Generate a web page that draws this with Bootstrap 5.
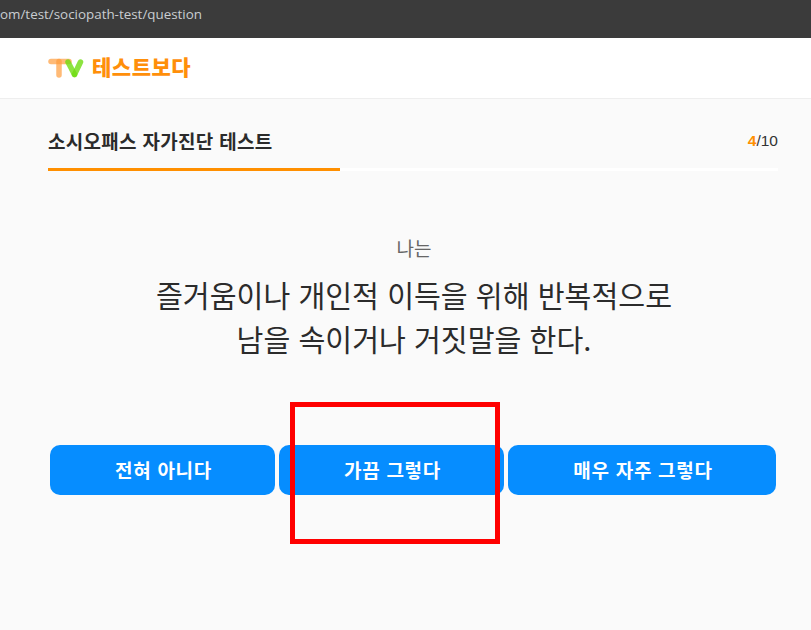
<!DOCTYPE html>
<html lang="ko">
<head>
    <meta charset="UTF-8">
    <meta name="viewport" content="width=device-width, initial-scale=1.0">
    <title>소시오패스 자가진단 테스트</title>
    <link href="https://cdn.jsdelivr.net/npm/bootstrap@5.3.0/dist/css/bootstrap.min.css" rel="stylesheet">
    <style>
        body {
            background: #fafafa;
            font-family: "Noto Sans CJK KR", "Noto Sans", sans-serif;
            color: #2b2b2b;
            height: 630px;
            overflow: hidden;
        }
        .url-bar {
            height: 38px;
            background: #3b3b3b;
            color: #c9cdd1;
            font: 13.4px/29px "Open Sans", sans-serif;
            white-space: nowrap;
        }
        .site-head {
            height: 61px;
            background: #fff;
            border-bottom: 1px solid #eee;
            padding-left: 48px;
        }
        .logo-word {
            color: #ff8f0a;
            font-size: 21px;
            font-weight: 900;
            letter-spacing: .5px;
            line-height: 1;
            margin-top: -3px;
        }
        .quiz-wrap { padding: 0 33px 0 48px; }
        .quiz-top { height: 69px; padding-top: 28px; }
        .quiz-title { font-size: 19px; font-weight: 700; letter-spacing: .3px; line-height: 28px; margin: 0; color: #2b2b2b; }
        .quiz-count { font: 15.5px/28px "Liberation Sans", sans-serif; color: #333; }
        .quiz-count b { color: #ff8f00; }
        .track { height: 3px; background: #fff; }
        .track-fill { height: 3px; background: #ff8f00; }
        .quiz-body { padding-left: 17px; }
        .quiz-lead { margin-top: 65px; font-size: 19px; line-height: 24px; color: #666; }
        .quiz-text { margin-top: 12px; font-size: 29.2px; line-height: 44px; font-weight: 400; color: #2b2b2b; }
        .answers { margin: 85px 35px 0 50px; width: 726px; gap: 4px; }
        .answer-btn {
            height: 50px;
            border: 0;
            border-radius: 10px;
            background: #068dff;
            color: #fff;
            font-size: 19px;
            font-weight: 700;
            letter-spacing: .7px;
            padding: 0 0 0 2px;
        }
        .w-short { width: 225px; }
        .w-long { width: 268px; }
        .mark-box {
            position: absolute;
            left: 290px;
            top: 402px;
            width: 210px;
            height: 142px;
            border: 5px solid #ff0000;
        }
    </style>
</head>
<body>
    <div class="url-bar">om/test/sociopath-test/question</div>

    <!-- 상단 로고 -->
    <div class="site-head d-flex align-items-center gap-2">
        <svg width="36" height="20" viewBox="0 0 36 20" fill="none" stroke-linecap="round">
            <path d="M3 3.5H21" stroke="#ff9d3c" stroke-opacity=".7" stroke-width="5.5"/>
            <path d="M11 3.5V17" stroke="#ff9d3c" stroke-opacity=".7" stroke-width="5.5"/>
            <path d="M20 4L26.5 16.5" stroke="#6fdc10" stroke-opacity=".8" stroke-width="5.5"/>
            <path d="M32.5 4L26.5 16.5" stroke="#6fdc10" stroke-opacity=".8" stroke-width="5.5"/>
        </svg>
        <span class="logo-word">테스트보다</span>
    </div>

    <!-- 진행 상태 -->
    <div class="quiz-wrap">
        <div class="quiz-top d-flex justify-content-between">
            <h1 class="quiz-title">소시오패스 자가진단 테스트</h1>
            <div class="quiz-count"><b>4</b>/10</div>
        </div>
        <div class="track"><div class="track-fill" style="width: 40%"></div></div>
    </div>

    <!-- 질문 -->
    <div class="quiz-body text-center">
        <div class="quiz-lead">나는</div>
        <div class="quiz-text">즐거움이나 개인적 이득을 위해 반복적으로<br>남을 속이거나 거짓말을 한다.</div>
    </div>

    <div class="answers d-flex">
        <button type="button" class="answer-btn w-short">전혀 아니다</button>
        <button type="button" class="answer-btn w-short">가끔 그렇다</button>
        <button type="button" class="answer-btn w-long">매우 자주 그렇다</button>
    </div>

    <div class="mark-box"></div>

    <script src="https://cdn.jsdelivr.net/npm/bootstrap@5.3.0/dist/js/bootstrap.bundle.min.js"></script>
</body>
</html>
